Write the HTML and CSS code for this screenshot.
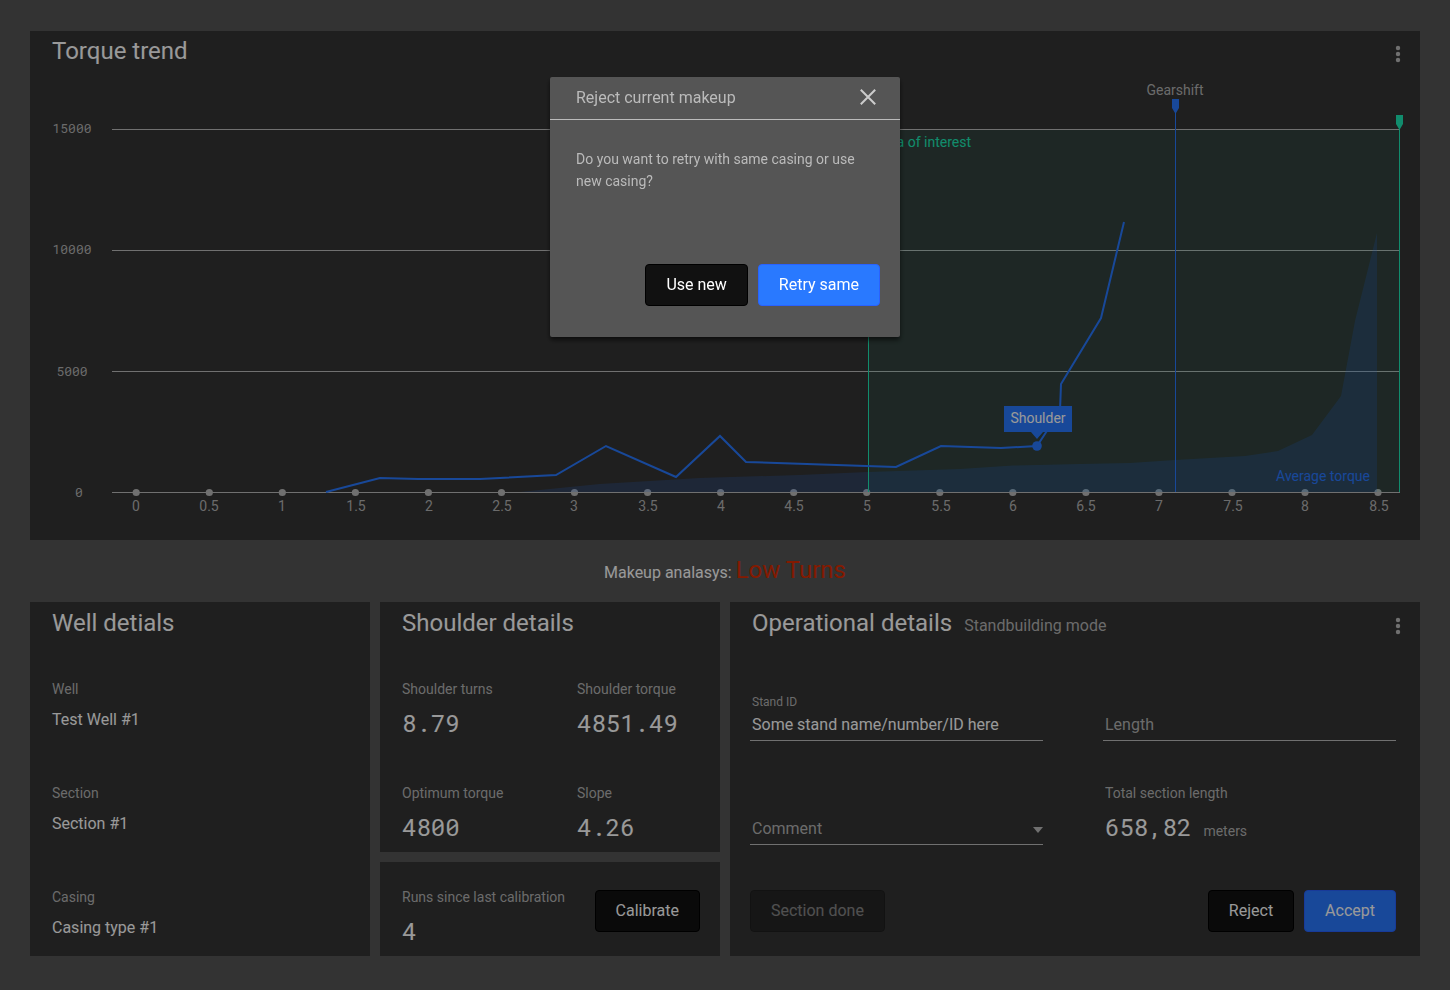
FILE: index.html
```html
<!DOCTYPE html>
<html lang="en">
<head>
<meta charset="utf-8">
<title>Torque trend</title>
<link rel="stylesheet" href="styles.css">
</head>
<body>
<main class="page">
  <section class="card">
    <header class="card-header chart-header">
      <h2 class="title">Torque trend</h2>
      <button class="menu-button" type="button" aria-label="Chart menu">
        <svg width="6" height="18" viewBox="0 0 6 18"><circle cx="3" cy="3" r="2.2"/><circle cx="3" cy="9" r="2.2"/><circle cx="3" cy="15" r="2.2"/></svg>
      </button>
    </header>
    <svg class="chart" viewBox="0 0 1390 469" role="img" aria-label="Torque by turns">
      <g class="grid-line">
        <path d="M82 58.500H1370M82 179.500H1370M82 300.500H1370M82 421.500H1370"/>
      </g>
      <g class="tick-dot">
        <circle cx="106.200" cy="421.500" r="3.600"/><circle cx="179.300" cy="421.500" r="3.600"/><circle cx="252.300" cy="421.500" r="3.600"/><circle cx="325.400" cy="421.500" r="3.600"/><circle cx="398.400" cy="421.500" r="3.600"/><circle cx="471.500" cy="421.500" r="3.600"/><circle cx="544.500" cy="421.500" r="3.600"/><circle cx="617.600" cy="421.500" r="3.600"/><circle cx="690.600" cy="421.500" r="3.600"/><circle cx="763.700" cy="421.500" r="3.600"/><circle cx="836.700" cy="421.500" r="3.600"/><circle cx="909.800" cy="421.500" r="3.600"/><circle cx="982.800" cy="421.500" r="3.600"/><circle cx="1055.900" cy="421.500" r="3.600"/><circle cx="1128.900" cy="421.500" r="3.600"/><circle cx="1202" cy="421.500" r="3.600"/><circle cx="1275" cy="421.500" r="3.600"/><circle cx="1348" cy="421.500" r="3.600"/>
      </g>
      <rect class="interest-area" x="838" y="59" width="531" height="362"/>
      <path class="average-area" d="M490 421L570 413 670 407 770 404 838 401 930 398 983 394.500 1050 393 1100 392 1145 389 1215 385 1248 380 1282 364 1311 325 1325 250 1347 162V421Z"/>
      <path class="interest-line" d="M838.500 59V421M1369.500 50V421"/>
      <path class="interest-pin" d="M1366 44h7v9l-3 5h-1l-3-5z"/>
      <path class="shift-line" d="M1145.500 40V421"/>
      <path class="shift-pin" d="M1142 28h7v9l-3 5h-1l-3-5z"/>
      <path class="torque-line" d="M296 421L350 407 388 408 450 408 526 404 576 375 646 406 690 365 716 391 866 396 911 375 971 377 1007 375 1030 340 1031 313 1071 247 1094 151"/>
      <path class="shift-pin" d="M974 335h68v26h-29l-6 7-6-7h-27z"/>
      <circle class="shift-pin" cx="1007" cy="375" r="4.800"/>
      <g class="axis-label y-label">
        <text x="42" y="62">15000</text><text x="42" y="183">10000</text><text x="42" y="305">5000</text><text x="49" y="426">0</text>
      </g>
      <g class="axis-label">
        <text x="106" y="440">0</text><text x="179" y="440">0.5</text><text x="252" y="440">1</text><text x="326" y="440">1.5</text><text x="399" y="440">2</text><text x="472" y="440">2.5</text><text x="544" y="440">3</text><text x="618" y="440">3.5</text><text x="691" y="440">4</text><text x="764" y="440">4.5</text><text x="837" y="440">5</text><text x="911" y="440">5.5</text><text x="983" y="440">6</text><text x="1056" y="440">6.5</text><text x="1129" y="440">7</text><text x="1203" y="440">7.5</text><text x="1275" y="440">8</text><text x="1349" y="440">8.5</text>
        <text x="1145" y="24">Gearshift</text>
      </g>
      <text class="interest-label" x="941" y="76">Area of interest</text>
      <text class="average-label" x="1340" y="410">Average torque</text>
      <text class="shoulder-label" x="1008" y="352">Shoulder</text>
    </svg>
  </section>

  <p class="analysis">Makeup analasys: <span class="analysis-result">Low Turns</span></p>

  <div class="panels">
    <section class="card">
      <header class="card-header"><h2 class="title">Well detials</h2></header>
      <dl class="fields">
        <div class="field"><dt class="label">Well</dt><dd class="value">Test Well #1</dd></div>
        <div class="field"><dt class="label">Section</dt><dd class="value">Section #1</dd></div>
        <div class="field"><dt class="label">Casing</dt><dd class="value">Casing type #1</dd></div>
      </dl>
    </section>

    <div class="stack">
      <section class="card">
        <header class="card-header"><h2 class="title">Shoulder details</h2></header>
        <dl class="fields two-columns">
          <div class="field"><dt class="label">Shoulder turns</dt><dd class="number">8.79</dd></div>
          <div class="field"><dt class="label">Shoulder torque</dt><dd class="number">4851.49</dd></div>
          <div class="field"><dt class="label">Optimum torque</dt><dd class="number">4800</dd></div>
          <div class="field"><dt class="label">Slope</dt><dd class="number">4.26</dd></div>
        </dl>
      </section>
      <section class="card calibration">
        <dl class="field"><dt class="label">Runs since last calibration</dt><dd class="number">4</dd></dl>
        <button class="button" type="button">Calibrate</button>
      </section>
    </div>

    <section class="card">
      <header class="card-header">
        <h2 class="title">Operational details</h2>
        <span class="subtitle">Standbuilding mode</span>
        <button class="menu-button" type="button" aria-label="Operation menu">
          <svg width="6" height="18" viewBox="0 0 6 18"><circle cx="3" cy="3" r="2.2"/><circle cx="3" cy="9" r="2.2"/><circle cx="3" cy="15" r="2.2"/></svg>
        </button>
      </header>
      <form class="operation">
        <div class="control">
          <label class="control-label" for="stand">Stand ID</label>
          <input class="input" id="stand" type="text" value="Some stand name/number/ID here">
        </div>
        <div class="control">
          <input class="input" type="text" placeholder="Length" aria-label="Length">
        </div>
        <div class="control select-control">
          <select class="input select" aria-label="Comment"><option>Comment</option></select>
          <svg class="arrow" width="10" height="6" viewBox="0 0 10 6"><path d="M0 0h10L5 6z"/></svg>
        </div>
        <dl class="field inset"><dt class="label">Total section length</dt><dd class="number">658,82<span class="unit">meters</span></dd></dl>
        <div class="actions">
          <button class="button" type="button" disabled>Section done</button>
          <span class="action-group">
            <button class="button" type="button">Reject</button>
            <button class="button primary" type="button">Accept</button>
          </span>
        </div>
      </form>
    </section>
  </div>
</main>

<div class="backdrop">
  <div class="dialog" role="dialog" aria-modal="true" aria-labelledby="dialog-title">
    <header class="dialog-header">
      <h2 class="dialog-title" id="dialog-title">Reject current makeup</h2>
      <button class="close" type="button" aria-label="Close">
        <svg width="16" height="16" viewBox="0 0 16 16"><path d="M.8.8l14.400 14.400M15.200.8L.8 15.200"/></svg>
      </button>
    </header>
    <p class="dialog-text">Do you want to retry with same casing or use new casing?</p>
    <div class="dialog-actions">
      <button class="button" type="button">Use new</button>
      <button class="button primary" type="button">Retry same</button>
    </div>
  </div>
</div>
</body>
</html>
```

FILE: styles.css
```css
* { box-sizing: border-box; }

body {
  margin: 0;
  min-height: 100vh;
  background: #555;
  color: #fff;
  font: 16px/24px Roboto, "Liberation Sans", sans-serif;
}

h2, p, dl, dd { margin: 0; font-weight: 400; }

.page { padding: 31px 30px 34px; }
.card { background: #353535; }

.card-header {
  display: flex;
  align-items: baseline;
  gap: 12px;
  padding: 0 19px 0 22px;
}
.title { font-size: 24px; line-height: 42px; }
.chart-header .title { line-height: 40px; }
.subtitle { color: #b3b3b3; }

.menu-button {
  display: flex;
  align-self: center;
  margin-left: auto;
  padding: 5px 0 0;
  border: 0;
  background: none;
}
.menu-button svg { fill: #bbb; }

/* Chart */
.chart { display: block; width: 100%; font-size: 14px; }
.grid-line { stroke: #bbb; }
.tick-dot { fill: #bbb; }
.interest-area { fill: #1de9b6; opacity: .08; }
.average-area { fill: #2979ff; opacity: .2; }
.interest-line { stroke: #1de9b6; }
.interest-pin { fill: #1de9b6; }
.shift-line { stroke: #2979ff; }
.shift-pin { fill: #2979ff; }
.torque-line { fill: none; stroke: #2979ff; stroke-width: 2; }
.axis-label { fill: #b3b3b3; text-anchor: middle; }
.y-label { font-family: "Roboto Mono", "Liberation Mono", monospace; font-size: 13px; }
.interest-label { fill: #1de9b6; text-anchor: end; }
.average-label { fill: #2979ff; text-anchor: end; }
.shoulder-label { fill: #fff; text-anchor: middle; }

.analysis {
  display: flex;
  align-items: center;
  justify-content: center;
  min-height: 62px;
  white-space: pre;
}
.analysis { align-items: baseline; padding: 9px 0; }
.analysis-result { color: #dd2c00; font-size: 24px; line-height: 42px; }

/* Detail panels */
.panels { display: grid; grid-template-columns: 340fr 340fr 690fr; gap: 10px; }
.stack { display: flex; flex-direction: column; gap: 10px; }

.fields { display: grid; row-gap: 40px; padding: 35px 22px 5px; }
.two-columns { grid-template-columns: 1fr 1fr; column-gap: 54px; }
.field { min-height: 64px; white-space: nowrap; }
.label { margin-bottom: 8px; color: #b3b3b3; font-size: 14px; line-height: 20px; }
.value { line-height: 26px; }
.number {
  font-family: "Roboto Mono", "Liberation Mono", monospace;
  font-size: 24px;
  line-height: 32px;
}
.unit { margin-left: 12px; color: #b3b3b3; font: 14px Roboto, "Liberation Sans", sans-serif; }

.calibration {
  display: flex;
  align-items: flex-start;
  justify-content: space-between;
  padding: 25px 20px 5px 22px;
}
.calibration .button { margin-top: 3px; }

.button {
  height: 42px;
  padding: 0 20px;
  border: 1px solid #000;
  border-radius: 4px;
  background: #111;
  color: #fff;
  font: inherit;
}
.button:disabled { opacity: .4; }
.primary { border-color: #2962ff; background: #2979ff; }

.operation {
  display: grid;
  grid-template-columns: 1fr 1fr;
  gap: 40px 60px;
  padding: 35px 24px 5px 20px;
}
.control {
  display: flex;
  flex-direction: column;
  justify-content: flex-end;
  height: 62px;
  margin-bottom: 2px;
}
.control-label { padding-left: 2px; color: #b3b3b3; font-size: 12px; line-height: 14px; }
.input {
  width: 100%;
  height: 32px;
  padding: 0 2px;
  border: 0;
  border-bottom: 1px solid #bbb;
  border-radius: 0;
  outline: 0;
  background: none;
  color: #fff;
  font: inherit;
}
.input::placeholder { color: #b3b3b3; }
.select { appearance: none; color: #b3b3b3; }
.select-control { position: relative; }
.arrow { position: absolute; right: 0; bottom: 12px; fill: #bbb; pointer-events: none; }
.inset { padding-left: 2px; }

.actions {
  display: flex;
  grid-column: 1 / -1;
  justify-content: space-between;
  min-height: 64px;
  padding-top: 3px;
}
.action-group, .dialog-actions { display: flex; gap: 10px; }

/* Dialog */
.backdrop {
  position: fixed;
  inset: 0;
  display: flex;
  align-items: flex-start;
  justify-content: center;
  padding-top: 77px;
  background: rgba(0, 0, 0, .4);
}
.dialog {
  width: 350px;
  border-radius: 2px;
  background: #555;
  box-shadow: 0 3px 5px rgba(0, 0, 0, .6);
  color: #bbb;
}
.dialog-header {
  display: flex;
  align-items: center;
  justify-content: space-between;
  height: 43px;
  padding: 0 24px 0 26px;
  border-bottom: 1px solid #bbb;
}
.dialog-title { font-size: 16px; }
.close { display: flex; padding: 0 0 2px; border: 0; background: none; }
.close svg { fill: none; stroke: #ccc; stroke-width: 2; }
.dialog-text { min-height: 144px; padding: 28px 26px 0; font-size: 14px; line-height: 22px; }
.dialog-actions { justify-content: flex-end; padding: 0 20px 31px; }
```
